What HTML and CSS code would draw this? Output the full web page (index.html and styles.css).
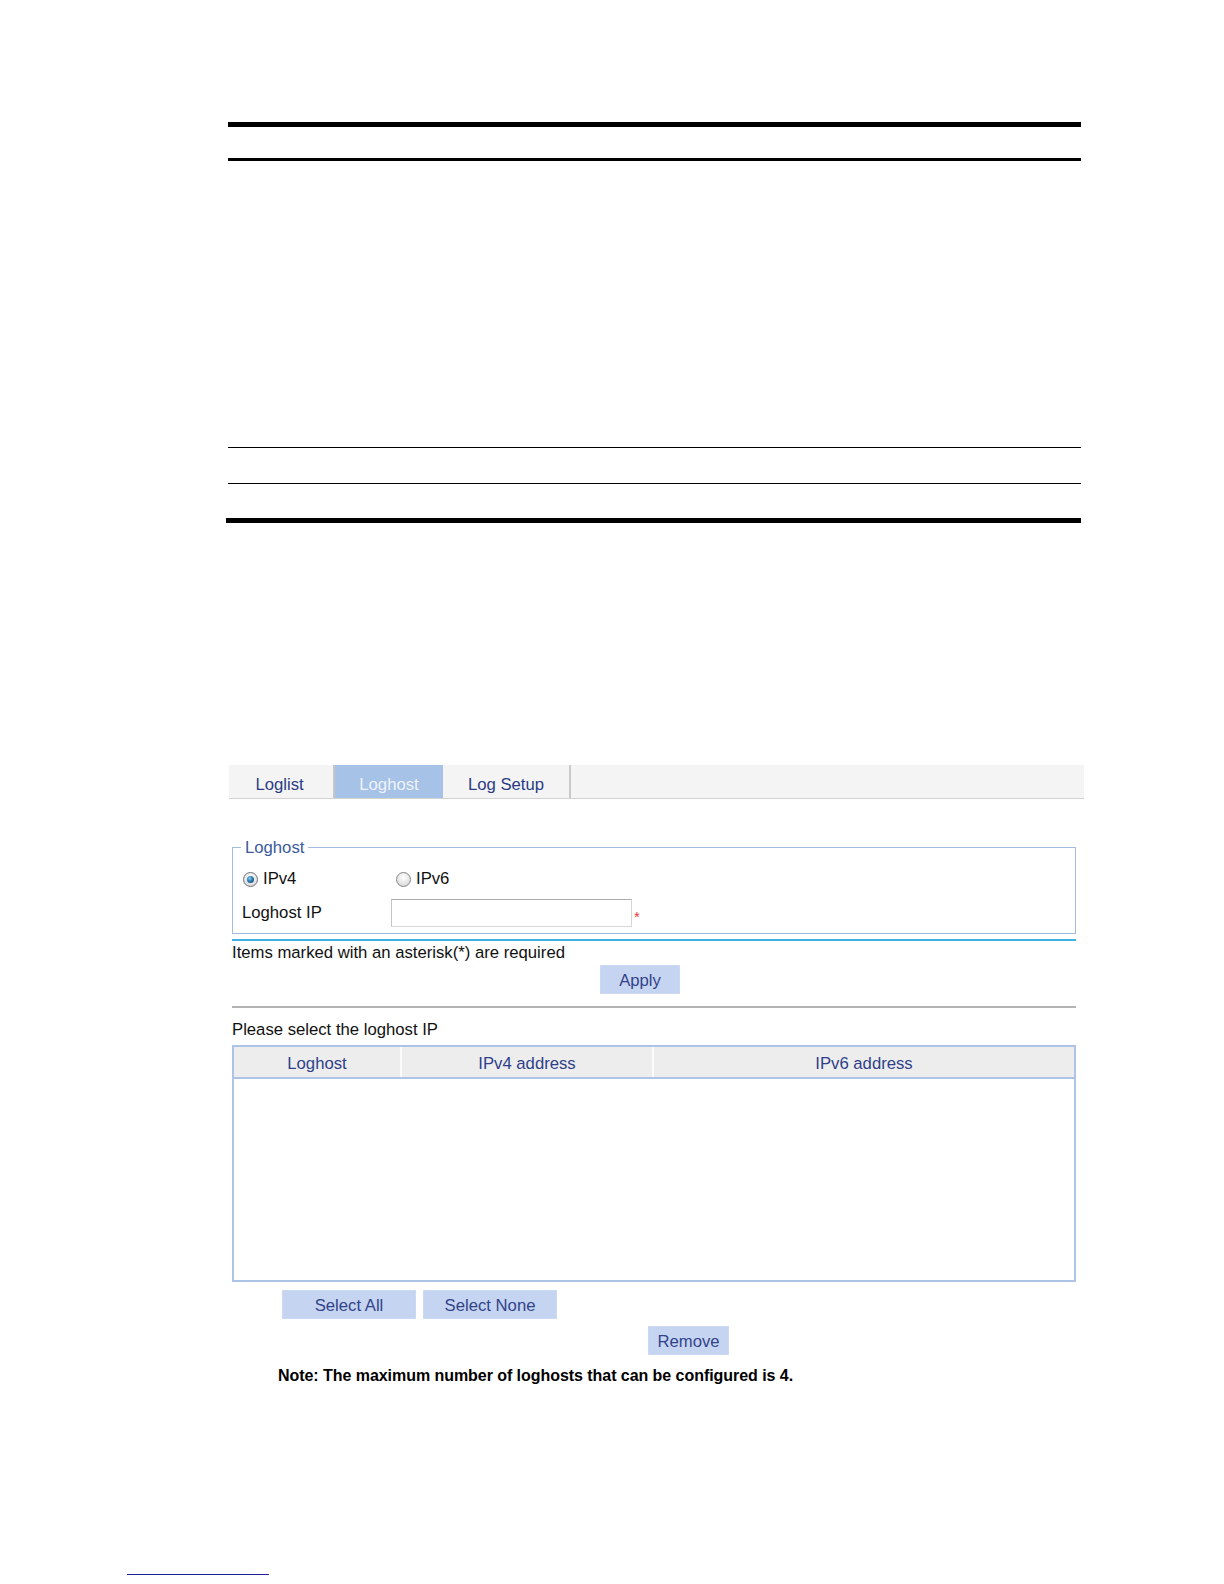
FILE: index.html
```html
<!DOCTYPE html>
<html lang="en">
<head>
<meta charset="utf-8">
<title>Loghost</title>
<link rel="stylesheet" href="styles.css">
</head>
<body>
<div class="page">
  <div class="rules">
    <div class="rule thick"></div>
    <div class="rule mid"></div>
    <div class="rule thin first-thin"></div>
    <div class="rule thin second-thin"></div>
    <div class="rule thick last"></div>
  </div>

  <div class="ui">
    <div class="tabbar">
      <div class="tab tab-loglist">Loglist</div>
      <div class="tab tab-loghost active">Loghost</div>
      <div class="tab tab-setup">Log Setup</div>
    </div>

    <div class="content">
      <fieldset class="box">
        <legend>Loghost</legend>
        <div class="radio-row">
          <div class="opt"><span class="radio on"><span class="dot"></span></span><span>IPv4</span></div>
          <div class="opt"><span class="radio"></span><span>IPv6</span></div>
        </div>
        <div class="ip-row">
          <span class="ip-label">Loghost IP</span>
          <span class="input"></span>
          <span class="star">*</span>
        </div>
      </fieldset>
      <div class="cyan-line"></div>
      <div class="text-line required">Items marked with an asterisk(*) are required</div>
      <div class="btn apply">Apply</div>
      <div class="gray-line"></div>
      <div class="text-line select-title">Please select the loghost IP</div>

      <div class="grid">
        <div class="grid-head">
          <div class="th col1">Loghost</div>
          <div class="th col2">IPv4 address</div>
          <div class="th col3">IPv6 address</div>
        </div>
        <div class="grid-body"></div>
      </div>

      <div class="sel-row">
        <div class="btn sel">Select All</div>
        <div class="btn sel">Select None</div>
      </div>
      <div class="btn remove">Remove</div>
      <div class="note">Note: The maximum number of loghosts that can be configured is 4.</div>
    </div>
  </div>

  <div class="footnote-line"></div>
</div>
</body>
</html>
```

FILE: styles.css
```css
html, body {
  margin: 0;
  padding: 0;
  background: #ffffff;
}

body {
  font-family: "Liberation Sans", Arial, sans-serif;
  font-size: 16.7px;
  color: #111111;
}

.page {
  padding-top: 122px;
  padding-bottom: 8px;
}

/* document rules */
.rules {
  margin-left: 228px;
  width: 853px;
}

.rule {
  background: #000000;
}

.rule.thick {
  height: 5px;
}

.rule.mid {
  height: 3px;
  margin-top: 31px;
}

.rule.thin {
  height: 1px;
}

.rule.first-thin {
  margin-top: 286px;
}

.rule.second-thin {
  margin-top: 35px;
}

.rule.last {
  margin-top: 34px;
  margin-left: -2px;
}

/* UI */
.ui {
  margin-left: 229px;
  width: 855px;
  margin-top: 242px;
}

.tabbar {
  display: flex;
  height: 33px;
  background: #f4f4f4;
  border-bottom: 1px solid #d2d2d2;
}

.tab {
  box-sizing: border-box;
  height: 33px;
  padding-top: 7px;
  line-height: 26px;
  text-align: center;
  color: #2a3b84;
}

.tab-loglist {
  width: 106px;
  padding-right: 3px;
  border-right: 2px solid #c6c6c6;
}

.tab-loghost {
  width: 108px;
}

.tab-setup {
  width: 128px;
  border-right: 2px solid #cacaca;
}

.tab.active {
  background: #a7c2e7;
  color: #eef3fa;
}

.content {
  margin-left: 3px;
  width: 844px;
}

.box {
  margin: 37px 0 0 0;
  padding: 7px 0 6px 9px;
  border: 1px solid #a3bbe0;
  min-width: 0;
}

.box legend {
  padding: 2px 4px 0 4px;
  margin-left: -1px;
  line-height: 20px;
  color: #3a5a9c;
}

.radio-row {
  display: flex;
  align-items: center;
  height: 28px;
}

.opt {
  display: flex;
  align-items: center;
  width: 153px;
  gap: 5px;
}

.radio {
  box-sizing: border-box;
  width: 15px;
  height: 15px;
  margin-left: 1px;
  border-radius: 50%;
  border: 1px solid #85878a;
  background: radial-gradient(circle at 50% 35%, #ffffff 0%, #ebebeb 45%, #cdcdcd 100%);
  display: flex;
  align-items: center;
  justify-content: center;
}

.radio.on {
  border-color: #6f7377;
}

.radio .dot {
  width: 7px;
  height: 7px;
  border-radius: 50%;
  background: radial-gradient(circle at 40% 35%, #8ad0f2 0%, #2a79ae 45%, #123f66 100%);
}

.ip-row {
  display: flex;
  align-items: center;
  height: 28px;
  margin-top: 6px;
}

.ip-label {
  width: 149px;
}

.input {
  box-sizing: border-box;
  width: 241px;
  height: 28px;
  background: #ffffff;
  border: 1px solid #d6d6d6;
  border-top-color: #ababab;
  border-left-color: #c4c4c4;
}

.star {
  align-self: flex-end;
  margin-left: 2px;
  margin-bottom: 3px;
  font-size: 15px;
  line-height: 15px;
  color: #e23a3f;
}

.cyan-line {
  height: 2px;
  margin-top: 5px;
  background: #3fb2e3;
}

.text-line {
  line-height: 19px;
}

.required {
  margin-top: 2px;
}

.btn {
  box-sizing: border-box;
  height: 29px;
  line-height: 30px;
  overflow: hidden;
  text-align: center;
  background: #c5d5f1;
  border: 1px solid #cbd9f2;
  color: #33438a;
}

.apply {
  width: 80px;
  margin-top: 3px;
  margin-left: 368px;
}

.gray-line {
  height: 2px;
  margin-top: 12px;
  background: #b3b3b3;
}

.select-title {
  margin-top: 12px;
}

.grid {
  margin-top: 6px;
  border: 2px solid #adc4e6;
}

.grid-head {
  display: flex;
  height: 30px;
  background: #ededed;
  border-bottom: 2px solid #adc4e6;
}

.th {
  box-sizing: border-box;
  padding-top: 3px;
  line-height: 27px;
  text-align: center;
  color: #2f3f8a;
}

.col1 {
  width: 168px;
  border-right: 2px solid #fbfbfb;
}

.col2 {
  width: 252px;
  border-right: 2px solid #fbfbfb;
}

.col3 {
  flex: 1;
}

.grid-body {
  height: 201px;
  background: #ffffff;
}

.sel-row {
  display: flex;
  gap: 7px;
  margin-top: 8px;
  padding-left: 50px;
}

.sel {
  width: 134px;
}

.remove {
  width: 81px;
  margin-top: 7px;
  margin-left: 416px;
}

.note {
  margin-top: 11px;
  margin-left: 46px;
  line-height: 19px;
  font-size: 16px;
  letter-spacing: -0.05px;
  font-weight: bold;
  color: #000000;
}

.footnote-line {
  margin-top: 189px;
  margin-left: 127px;
  width: 142px;
  height: 1px;
  background: #22229c;
}
```
